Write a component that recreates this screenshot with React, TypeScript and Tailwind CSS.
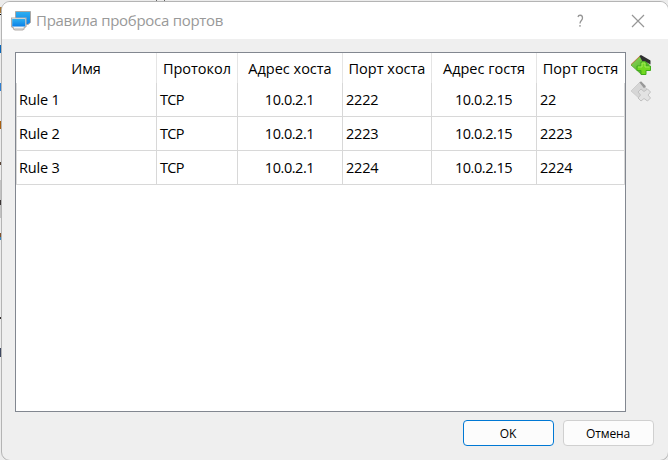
import React from "react";

const rules = [
  { name: "Rule 1", protocol: "TCP", hostIp: "10.0.2.1", hostPort: "2222", guestIp: "10.0.2.15", guestPort: "22" },
  { name: "Rule 2", protocol: "TCP", hostIp: "10.0.2.1", hostPort: "2223", guestIp: "10.0.2.15", guestPort: "2223" },
  { name: "Rule 3", protocol: "TCP", hostIp: "10.0.2.1", hostPort: "2224", guestIp: "10.0.2.15", guestPort: "2224" },
];

const columns = ["Имя", "Протокол", "Адрес хоста", "Порт хоста", "Адрес гостя", "Порт гостя"];

// Slivers of the page behind the dialog, visible along its left edge
const slivers = [
  { top: "top-[7px]", look: "h-[6px] bg-[#a87838]" },
  { top: "top-[14px]", look: "h-px bg-black" },
  { top: "top-[45px]", look: "h-[8px] bg-[#0a66b8]" },
  { top: "top-[83px]", look: "h-[8px] bg-[#2f7ed0]" },
  { top: "top-[121px]", look: "h-[8px] bg-[#a85f10]" },
  { top: "top-[162px]", look: "h-[3px] bg-[#5a4436]" },
  { top: "top-[180px]", look: "h-[38px] bg-[#c2c2c2]" },
  { top: "top-[200px]", look: "h-[5px] bg-[#3b3434]" },
  { top: "top-[233px]", look: "h-[4px] bg-[#80502a]" },
  { top: "top-[237px]", look: "h-[3px] bg-[#3b86bd]" },
  { top: "top-[317px]", look: "h-[2px] bg-[#302c2c]" },
  { top: "top-[348px]", look: "h-[9px] bg-[#3f4860]" },
];

function NetworkIcon() {
  return (
    <svg width="22" height="22" viewBox="0 0 22 22" className="shrink-0">
      <defs>
        <linearGradient id="screen" x1="0" y1="0" x2="0" y2="1">
          <stop offset="0" stopColor="#2fb0f0" />
          <stop offset="1" stopColor="#0a7fe8" />
        </linearGradient>
      </defs>
      <path d="M4.500 1.500h15v11l-2.500 2h-12.500z" fill="url(#screen)" stroke="#aaa8a6" />
      <path d="M.500 8h14.500v8.500l-2 1.500v1l-1.500 1h-7.500l-1.500-1v-1l-2-1.500z" fill="#f4f4f4" stroke="#b4aeaa" strokeWidth="1.200" />
      <path d="M1.200 9h13v7.500h-13z" fill="url(#screen)" />
      <path d="M3.500 19h8.500" stroke="#b5b5b5" />
    </svg>
  );
}

function AddIcon() {
  return (
    <svg width="22" height="22" viewBox="0 0 22 22">
      <defs>
        <linearGradient id="leaf" x1="0" y1="0" x2="1" y2="1">
          <stop offset="0" stopColor="#9ad768" />
          <stop offset="1" stopColor="#35a80c" />
        </linearGradient>
      </defs>
      <path d="M1 11L10.500 2l9 9-8.500 9z" fill="url(#leaf)" stroke="#57a62b" strokeWidth=".8" />
      <path d="M1 10.500L10 2" stroke="#c9763f" strokeWidth=".9" />
      <path d="M9.500 2L11 1l9.500 5.500v4l-2.500-1.500-4-2-1.500.5z" fill="#303030" />
      <path d="M11 8h5v4h4.500v4.500H16v4h-5v-4H7V12h4z" fill="#72d821" stroke="#42ac1c" />
      <path d="M8 13h4V9h3v4h4.500" fill="none" stroke="#a2ea5b" />
    </svg>
  );
}

function RemoveIcon() {
  return (
    <svg width="22" height="22" viewBox="0 0 22 22">
      <path d="M1 11L10 2l7 7-7 10z" fill="#d6d6d6" stroke="#c8c8c8" strokeWidth=".8" />
      <path d="M9.500 2.500L11 1.200l5 5-2 2z" fill="#989898" />
      <path d="M8 12l3-3 3 2.500L17.500 9l3 3-2.500 3 2.500 3-3 3-3.500-2.500-3 2.500-3-3 2.500-3z" fill="#e2e2e2" stroke="#c0c0c0" strokeLinejoin="round" />
    </svg>
  );
}

export default function App() {
  return (
    <div className="relative flex h-[460px] w-[668px] overflow-hidden bg-[#ececec] font-['Open_Sans','Noto_Sans',sans-serif] text-black">
      {slivers.map((s) => (
        <span key={s.top} className={`absolute left-0 w-[2px] ${s.top} ${s.look}`} />
      ))}
      <span className="absolute left-[156px] top-0 h-px w-px bg-[#666]" />
      <span className="absolute left-[164px] top-0 h-px w-px bg-[#666]" />
      <div className="relative mt-px ml-px flex h-[460px] w-[668px] shrink-0 flex-col overflow-hidden rounded-[9px] border border-[#b4b4b4] bg-[#efefef]">
        <header className="flex h-[37px] shrink-0 items-center bg-white pl-[9px] text-[#999]">
          <NetworkIcon />
          <h1 className="ml-[3px] text-[15px] tracking-[-0.28px] whitespace-nowrap">Правила проброса портов</h1>
          <svg width="72" height="16" viewBox="0 0 72 16" className="mr-[21px] ml-auto">
            <path d="M3 4C3.500 1.500 7.500 1.500 7.500 5c0 2.500-2.500 2.500-2.500 5.500M5 12v1.700" fill="none" stroke="#969696" strokeWidth="1.300" />
            <path d="M57 2l12 12M69 2L57 14" stroke="#969696" strokeWidth="1.200" />
          </svg>
        </header>
        <main className="flex h-[373px] shrink-0 pt-[13px] pl-[13px]">
          <div className="h-[360px] w-[611px] border border-[#828790] bg-white">
            <table className="w-[609px] table-fixed border-separate border-spacing-0 text-[14.500px] leading-[20px]">
              <colgroup>
                <col className="w-[141px]" />
                <col className="w-[81px]" />
                <col className="w-[105px]" />
                <col className="w-[89px]" />
                <col className="w-[105px]" />
                <col className="w-[88px]" />
              </colgroup>
              <thead>
                <tr className="h-[30px]">
                  {columns.map((c) => (
                    <th key={c} className="border-r border-[#e5e5e5] p-0 pt-[2px] text-center font-normal whitespace-nowrap last:border-transparent">
                      {c}
                    </th>
                  ))}
                </tr>
              </thead>
              <tbody>
                {rules.map((r) => (
                  <tr key={r.name} className="h-[34px] [&>td]:border-r [&>td]:border-b [&>td]:border-[#d8d8d8] [&>td]:py-0">
                    <td className="border-l pr-0 pl-[2px] tracking-[-0.2px]">{r.name}</td>
                    <td className="pr-0 pl-[3px] tracking-[-0.7px]">{r.protocol}</td>
                    <td className="pr-px pl-0 text-center tracking-[-0.45px]">{r.hostIp}</td>
                    <td className="pr-0 pl-[3px] tracking-[-0.2px]">{r.hostPort}</td>
                    <td className="pr-px pl-0 text-center tracking-[-0.45px]">{r.guestIp}</td>
                    <td className="pr-0 pl-[3px] tracking-[-0.2px]">{r.guestPort}</td>
                  </tr>
                ))}
              </tbody>
            </table>
          </div>
          <aside className="ml-[4px] flex flex-col gap-[4px] pt-[2px]">
            <AddIcon />
            <RemoveIcon />
          </aside>
        </main>
        <footer className="flex justify-end gap-[9px] pt-[8px] pr-[14px] text-[12px]">
          <button className="h-[26px] w-[91px] rounded-[4px] border border-[#0078d4] bg-[#fcfcfc] pt-[2px] pr-px tracking-[-0.2px]">OK</button>
          <button className="h-[26px] w-[91px] rounded-[4px] border border-[#d0d0d0] bg-[#fcfcfc] pt-[2px] pr-px tracking-[-0.1px]">Отмена</button>
        </footer>
      </div>
    </div>
  );
}
